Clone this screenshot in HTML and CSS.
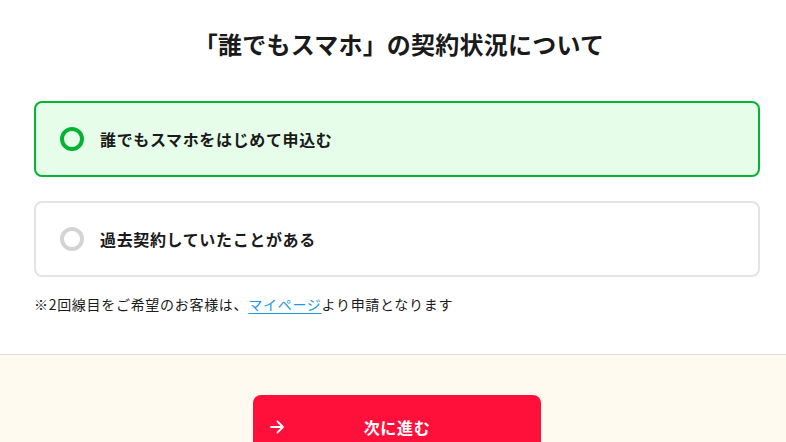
FILE: index.html
```html
<!DOCTYPE html>
<html lang="ja">
<head>
<meta charset="utf-8">
<link rel="stylesheet" href="styles.css">
</head>
<body>
<main class="main">
  <h1 class="title">「誰でもスマホ」の契約状況について</h1>
  <div class="options">
    <label class="option selected">
      <span class="radio"></span>
      <span class="option-text">誰でもスマホをはじめて申込む</span>
    </label>
    <label class="option">
      <span class="radio"></span>
      <span class="option-text">過去契約していたことがある</span>
    </label>
  </div>
  <p class="note">※2回線目をご希望のお客様は、<a class="link" href="#">マイページ</a>より申請となります</p>
</main>
<footer class="footer">
  <button class="next" type="button">
    <svg class="arrow" width="14" height="14" viewBox="0 0 14 14" fill="none" stroke="#fff" stroke-width="1.8" stroke-linecap="round" stroke-linejoin="round"><path d="M1 7h12M7.5 1.5 13 7l-5.5 5.5"/></svg>
    <span class="next-text">次に進む</span>
  </button>
</footer>
</body>
</html>
```
FILE: styles.css
```css
html, body { margin: 0; padding: 0; }
body {
  font-family: "Noto Sans CJK JP", "Noto Sans", sans-serif;
  color: #1a1a1a;
  background: #fff;
  width: 786px;
  height: 442px;
  overflow: hidden;
}
.main {
  padding: 26px 26px 0 34px;
  height: 328px;
  border-bottom: 1px solid #dcdcdc;
}
.title {
  margin: 0;
  font-size: 24px;
  font-weight: 700;
  line-height: 36px;
  text-align: center;
  letter-spacing: 0.01em;
  padding-left: 4px;
}
.options {
  margin-top: 39px;
  display: flex;
  flex-direction: column;
  gap: 24px;
}
.option {
  box-sizing: border-box;
  height: 76px;
  border: 2px solid #e4e4e6;
  border-radius: 8px;
  background: #fff;
  display: flex;
  align-items: center;
  padding-left: 24px;
}
.option.selected {
  border-color: #05b334;
  background: #e6fee9;
}
.radio {
  box-sizing: border-box;
  width: 24px;
  height: 24px;
  border-radius: 50%;
  border: 4px solid #d4d4d4;
  flex: none;
}
.option.selected .radio { border-color: #05b334; }
.option-text {
  margin-left: 16px;
  font-size: 16px;
  font-weight: 700;
  letter-spacing: 0.04em;
  line-height: 24px;
}
.note {
  margin: 17px 0 0;
  font-size: 14px;
  line-height: 20px;
  color: #1a1a1a;
  letter-spacing: 0.05em;
}
.link {
  color: #1a9be5;
  text-decoration: underline;
  text-underline-offset: 3px;
}
.footer {
  background: #fffaef;
  height: 87px;
  overflow: hidden;
  display: flex;
  justify-content: center;
  align-items: flex-start;
  padding-top: 40px;
  box-sizing: border-box;
}
.next {
  flex: none;
  width: 288px;
  height: 64px;
  border: none;
  border-radius: 8px;
  background: #ff103b;
  color: #fff;
  position: relative;
  font-family: inherit;
  font-size: 16px;
  font-weight: 700;
  display: flex;
  align-items: center;
  justify-content: center;
  padding: 0;
  margin-left: 8px;
  letter-spacing: 0.04em;
}
.arrow {
  position: absolute;
  left: 17px;
  top: 25px;
}
.next-text { line-height: 64px; }
```
